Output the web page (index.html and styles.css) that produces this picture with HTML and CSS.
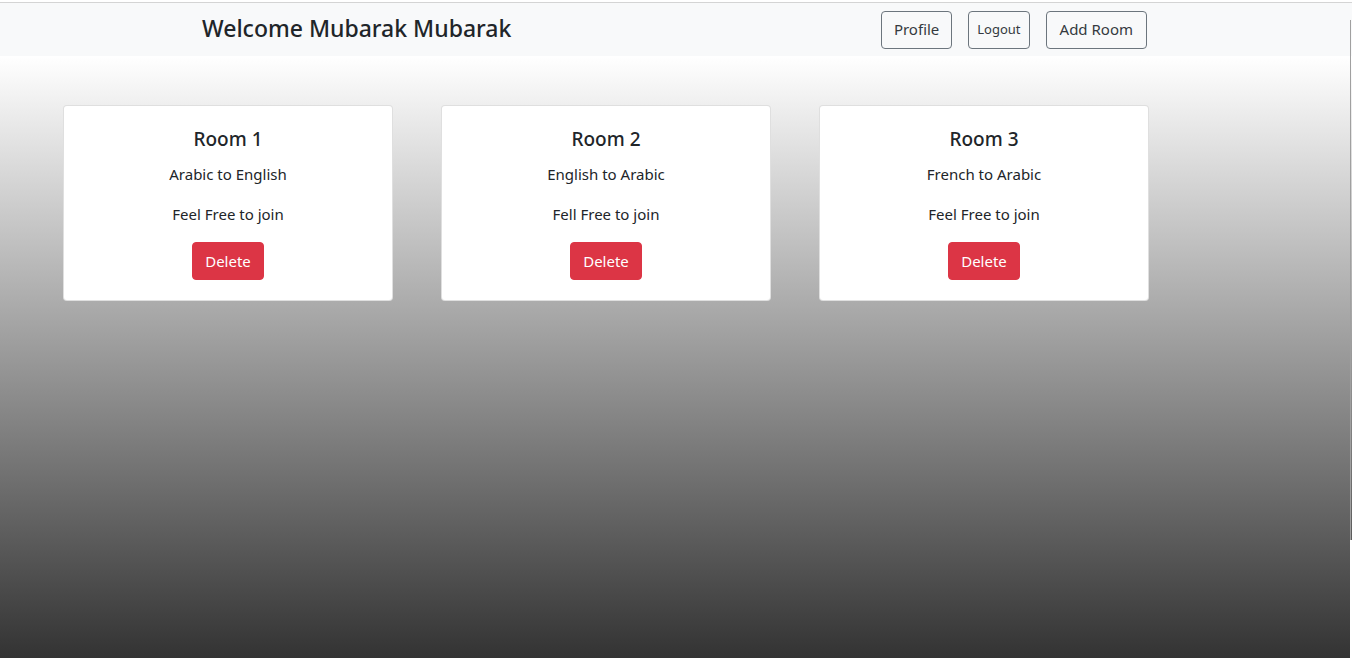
FILE: index.html
```html
<!DOCTYPE html>
<html lang="en">
<head>
<meta charset="utf-8">
<title>Rooms</title>
<link rel="stylesheet" href="styles.css">
</head>
<body>
<div class="topline"></div>
<nav class="navbar">
  <h3 class="welcome">Welcome Mubarak Mubarak</h3>
  <div class="actions">
    <button class="btn btn-outline">Profile</button>
    <button class="btn btn-outline btn-small">Logout</button>
    <button class="btn btn-outline btn-wide">Add Room</button>
  </div>
</nav>
<main class="rooms">
  <div class="card">
    <h5 class="card-title">Room 1</h5>
    <p class="card-text">Arabic to English</p>
    <p class="card-text">Feel Free to join</p>
    <button class="btn btn-danger">Delete</button>
  </div>
  <div class="card">
    <h5 class="card-title">Room 2</h5>
    <p class="card-text">English to Arabic</p>
    <p class="card-text">Fell Free to join</p>
    <button class="btn btn-danger">Delete</button>
  </div>
  <div class="card">
    <h5 class="card-title">Room 3</h5>
    <p class="card-text">French to Arabic</p>
    <p class="card-text">Feel Free to join</p>
    <button class="btn btn-danger">Delete</button>
  </div>
</main>
<div class="scroll-line"></div>
<div class="scroll-edge"></div>
</body>
</html>
```
FILE: styles.css
```css
html, body {
  margin: 0;
  padding: 0;
  height: 100%;
}
body {
  font-family: "Noto Sans", "Open Sans", sans-serif;
  color: #212529;
  background: linear-gradient(to bottom, #ffffff 57px, #333333 100%);
  overflow: hidden;
}
.topline {
  height: 3px;
  border-bottom: 1px solid #d4d4d4;
  background: #fff;
  box-sizing: border-box;
}
.navbar {
  height: 53px;
  background: #f8f9fa;
  display: flex;
  align-items: center;
  box-sizing: border-box;
  padding-left: 202px;
}
.welcome {
  margin: -2px 0 0;
  font-size: 23px;
  font-weight: 500;
  line-height: 1.2;
}
.actions {
  display: flex;
  gap: 16px;
  margin-left: auto;
  margin-right: 205px;
}
.btn {
  font-family: inherit;
  font-size: 15px;
  line-height: 1.5;
  border-radius: 4px;
  padding: 0 12px;
  height: 38px;
  cursor: pointer;
}
.btn-outline {
  background: transparent;
  border: 1px solid #6c757d;
  color: #343a40;
}
.btn-small {
  font-size: 13px;
  padding: 0 8px;
}
.btn-wide {
  padding: 0 13px;
}
.rooms {
  display: flex;
  gap: 48px;
  padding-left: 63px;
  padding-top: 49px;
}
.card {
  width: 330px;
  height: 196px;
  box-sizing: border-box;
  background: #fff;
  border: 1px solid rgba(0, 0, 0, 0.125);
  border-radius: 4px;
  display: flex;
  flex-direction: column;
  align-items: center;
  padding-top: 19px;
}
.card-title {
  margin: 0;
  font-size: 19px;
  font-weight: 500;
  line-height: 28px;
}
.card-text {
  margin: 9px 0 0;
  font-size: 15px;
  line-height: 24px;
}
.card-text + .card-text {
  margin-top: 16px;
}
.btn-danger {
  margin-top: 16px;
  background: #dc3545;
  border: 1px solid #dc3545;
  color: #fff;
  padding: 0 12px;
}
.scroll-line {
  position: absolute;
  top: 20px;
  right: 1px;
  width: 1px;
  height: 520px;
  background: #a0a0a0;
}
.scroll-edge {
  position: absolute;
  top: 540px;
  right: 0;
  width: 2px;
  height: 118px;
  background: #fff;
}
```
